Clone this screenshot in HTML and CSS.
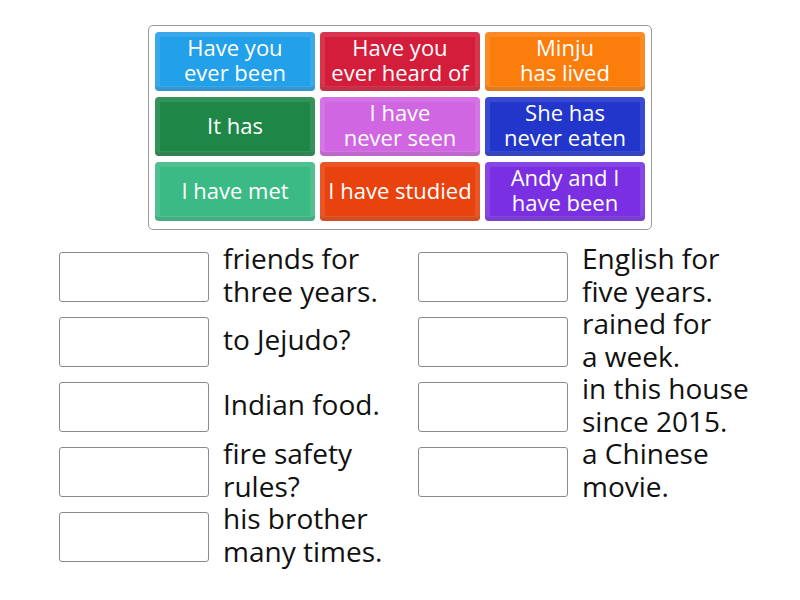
FILE: index.html
```html
<!DOCTYPE html>
<html>
<head>
<meta charset="utf-8">
<link rel="stylesheet" href="styles.css">
</head>
<body>
<div class="bank">
  <div class="tile c1"><span>Have you<br>ever been</span></div>
  <div class="tile c2"><span>Have you<br>ever heard of</span></div>
  <div class="tile c3"><span>Minju<br>has lived</span></div>
  <div class="tile c4"><span>It has</span></div>
  <div class="tile c5"><span>I have<br>never seen</span></div>
  <div class="tile c6"><span>She has<br>never eaten</span></div>
  <div class="tile c7"><span>I have met</span></div>
  <div class="tile c8"><span>I have studied</span></div>
  <div class="tile c9"><span>Andy and I<br>have been</span></div>
</div>
<div class="slots">
  <div class="col">
    <div class="item"><div class="box"></div><div class="txt">friends for<br>three years.</div></div>
    <div class="item"><div class="box"></div><div class="txt">to Jejudo?</div></div>
    <div class="item"><div class="box"></div><div class="txt">Indian food.</div></div>
    <div class="item"><div class="box"></div><div class="txt">fire safety<br>rules?</div></div>
    <div class="item"><div class="box"></div><div class="txt">his brother<br>many times.</div></div>
  </div>
  <div class="col">
    <div class="item"><div class="box"></div><div class="txt">English for<br>five years.</div></div>
    <div class="item"><div class="box"></div><div class="txt">rained for<br>a week.</div></div>
    <div class="item"><div class="box"></div><div class="txt">in this house<br>since 2015.</div></div>
    <div class="item"><div class="box"></div><div class="txt">a Chinese<br>movie.</div></div>
  </div>
</div>
</body>
</html>
```

FILE: styles.css
```css
html, body {
  margin: 0;
  padding: 0;
  background: #ffffff;
  font-family: "Open Sans", "Noto Sans", sans-serif;
  font-variant-ligatures: none;
}

body {
  min-height: 600px;
}

.bank {
  width: 504px;
  margin: 25px 0 0 148px;
  border: 1px solid #9a9a9a;
  border-radius: 5px;
  padding: 6px;
  display: grid;
  grid-template-columns: repeat(3, 160px);
  grid-auto-rows: 59px;
  column-gap: 5px;
  row-gap: 6px;
  box-sizing: border-box;
  height: 205px;
}

.tile {
  border-radius: 4px;
  color: #ffffff;
  font-size: 22px;
  line-height: 25px;
  text-align: center;
  display: flex;
  align-items: center;
  justify-content: center;
  padding-bottom: 3px;
  box-sizing: border-box;
  white-space: nowrap;
  box-shadow: inset 0 0 0 5px rgba(255,255,255,0.1), inset 0 -4px 0 rgba(0,0,0,0.12);
}

.c1 { background: #23a0ea; }
.c2 { background: #d41d3a; }
.c3 { background: #fb7d0c; }
.c4 { background: #1e8747; }
.c5 { background: #d066e2; }
.c6 { background: #2236cc; }
.c7 { background: #3cba85; }
.c8 { background: #e8420e; }
.c9 { background: #7a30e2; }

.slots {
  display: grid;
  grid-template-columns: 359px 359px;
  padding-left: 59px;
  margin-top: 22px;
}

.col {
  display: grid;
  grid-auto-rows: 50px;
  row-gap: 15px;
}

.item {
  display: flex;
  align-items: center;
  height: 50px;
}

.box {
  width: 150px;
  height: 50px;
  box-sizing: border-box;
  border: 1px solid #8a8a8a;
  border-radius: 3px;
  flex: none;
}

.txt {
  margin-left: 14px;
  margin-bottom: 5px;
  font-size: 28px;
  line-height: 33px;
  color: #111111;
  white-space: nowrap;
}
```
